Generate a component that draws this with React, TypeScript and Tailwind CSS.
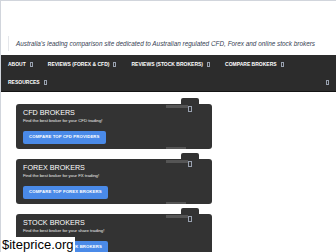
import React from "react";

const navRow1 = ["ABOUT", "REVIEWS (FOREX & CFD)", "REVIEWS (STOCK BROKERS)", "COMPARE BROKERS"];

const cards = [
  { title: "CFD BROKERS", sub: "Find the best broker for your CFD trading!", btn: "COMPARE TOP CFD PROVIDERS" },
  { title: "FOREX BROKERS", sub: "Find the best broker for your FX trading!", btn: "COMPARE TOP FOREX BROKERS" },
  { title: "STOCK BROKERS", sub: "Find the best broker for your share trading!", btn: "COMPARE TOP STOCK BROKERS" },
];

function Glyph() {
  // missing-icon box shown by the site
  return <span className="inline-block w-[3px] h-[5px] border border-gray-400 ml-[4px]" />;
}

function Card({ title, sub, btn }: { title: string; sub: string; btn: string }) {
  return (
    <div className="relative w-[196px] bg-[#333333] rounded-[3px] px-[7px] pt-[4px] pb-[5px] flex flex-col items-start">
      {/* little tab sticking out on top */}
      <div className="absolute -top-[6px] left-[165px] w-[18px] h-[7px] bg-[#333333] rounded-t-[2px]" />
      <div className="absolute top-[1px] left-[150px] w-[22px] h-[3px] bg-[#555555]" />
      <div className="absolute top-[2px] left-[172px] w-[4px] h-[6px] border border-gray-400" />
      <div className="absolute bottom-0 left-[150px] w-[20px] h-[2px] bg-[#555555]" />
      <div className="text-white text-[7.2px] leading-[9px]">{title}</div>
      <div className="text-white/90 text-[4.3px] leading-[6px] mt-[1px]">{sub}</div>
      <div className="mt-[7px] flex items-center h-[13px] px-[6px] bg-[#4a8ae8] rounded-[2px] text-white text-[4.3px] leading-none font-bold tracking-[0.1px]">
        {btn}
      </div>
    </div>
  );
}

export default function App() {
  return (
    <div
      className="relative w-[336px] h-[252px] overflow-hidden bg-white border-t border-l border-gray-300"
      style={{ fontFamily: '"Liberation Sans", Arial, sans-serif' }}
    >
      {/* Cabeçalho */}
      <div className="h-[54px] flex items-end pb-[4px] pl-[7px]">
        <div className="border-l border-gray-200 pl-[7px] h-[15px] flex items-center">
          <span className="italic text-[6.4px] text-gray-700 whitespace-nowrap">
            Australia's leading comparison site dedicated to Australian regulated CFD, Forex and online stock brokers
          </span>
        </div>
      </div>

      {/* Menu */}
      <nav className="bg-[#2c2c2c] border-b border-[#141414] h-[37px] px-[7px] flex flex-col">
        <div className="h-[19px] flex items-center gap-[15px]">
          {navRow1.map(n => (
            <span key={n} className="text-white text-[5px] font-bold whitespace-nowrap flex items-center">
              {n}
              <Glyph />
            </span>
          ))}
        </div>
        <div className="h-[17px] flex items-center justify-between">
          <span className="text-white text-[5px] font-bold flex items-center">
            RESOURCES
            <Glyph />
          </span>
          <Glyph />
        </div>
      </nav>

      {/* Cards */}
      <div className="pl-[15px] pt-[12px] flex flex-col gap-[10px]">
        {cards.map(c => (
          <Card key={c.title} {...c} />
        ))}
      </div>

      {/* watermark */}
      <div className="absolute left-0 bottom-0 bg-white px-[1px] h-[15px] flex items-center text-black text-[13px] leading-none">
        $iteprice.org
      </div>
    </div>
  );
}
